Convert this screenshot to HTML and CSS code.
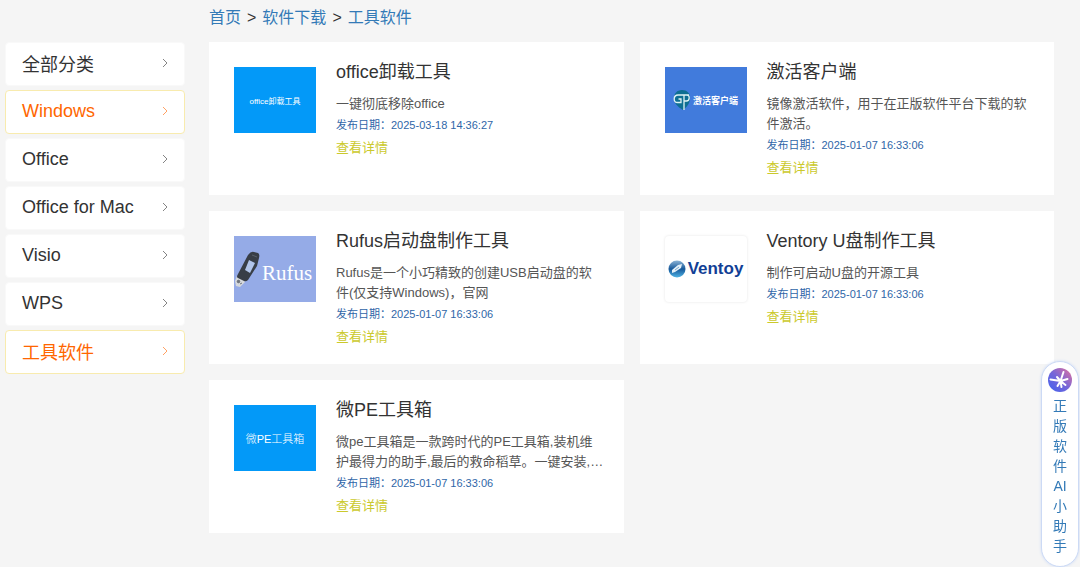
FILE: index.html
```html
<!DOCTYPE html>
<html lang="zh-CN">
<head>
    <meta charset="UTF-8">
    <meta name="viewport" content="width=device-width, initial-scale=1.0">
    <title>工具软件</title>
    <link rel="stylesheet" href="styles.css">
</head>
<body>
    <div class="page">
        <ul class="side">
            <li><a href="#">全部分类<svg class="arrow" viewBox="0 0 6 10"><path d="M1 1l4 4-4 4"/></svg></a></li>
            <li><a href="#" class="on">Windows<svg class="arrow" viewBox="0 0 6 10"><path d="M1 1l4 4-4 4"/></svg></a></li>
            <li><a href="#">Office<svg class="arrow" viewBox="0 0 6 10"><path d="M1 1l4 4-4 4"/></svg></a></li>
            <li><a href="#">Office for Mac<svg class="arrow" viewBox="0 0 6 10"><path d="M1 1l4 4-4 4"/></svg></a></li>
            <li><a href="#">Visio<svg class="arrow" viewBox="0 0 6 10"><path d="M1 1l4 4-4 4"/></svg></a></li>
            <li><a href="#">WPS<svg class="arrow" viewBox="0 0 6 10"><path d="M1 1l4 4-4 4"/></svg></a></li>
            <li><a href="#" class="on">工具软件<svg class="arrow" viewBox="0 0 6 10"><path d="M1 1l4 4-4 4"/></svg></a></li>
        </ul>

        <div class="main">
            <div class="crumb">
                <a href="#">首页</a><span>&gt;</span><a href="#">软件下载</a><span>&gt;</span><a href="#">工具软件</a>
            </div>

            <div class="list">
                <div class="card">
                    <div class="pic blue"><span class="pic_office">office卸载工具</span></div>
                    <div class="info">
                        <h3>office卸载工具</h3>
                        <p class="desc">一键彻底移除office</p>
                        <p class="date">发布日期：2025-03-18 14:36:27</p>
                        <a href="#" class="more">查看详情</a>
                    </div>
                </div>

                <div class="card">
                    <div class="pic royal">
                        <svg class="logo_gt" viewBox="0 0 18 22">
                            <path d="M9 1C4 1 1 4.500 1 9.500c0 5 4 8.500 9 11.500 4-3 7-7 7-12 0-5-3-8-8-8z" fill="#0d6f92"/>
                            <path d="M16 6H5C2.500 6 1.200 8 1.200 10s1.300 3.500 3.300 3.500h3.500V10H5.500M11 6v15M11 12h2.500c3.500 0 3.500-6 .5-6" fill="none" stroke="#dff3f5" stroke-width="1.300"/>
                        </svg>
                        <span class="pic_client">激活客户端</span>
                    </div>
                    <div class="info">
                        <h3>激活客户端</h3>
                        <p class="desc">镜像激活软件，用于在正版软件平台下载的软件激活。</p>
                        <p class="date">发布日期：2025-01-07 16:33:06</p>
                        <a href="#" class="more">查看详情</a>
                    </div>
                </div>

                <div class="card">
                    <div class="pic lilac">
                        <svg class="logo_usb" viewBox="0 0 26 38">
                            <path d="M3 26l6 2 2 4-5 5-4-1-1-5z" fill="#d5d8dc"/>
                            <path d="M3 31l2-1 1 2-2 1zM6 34l2-1" fill="#6f747c" stroke="#6f747c"/>
                            <path d="M4 24L14 5q3-4 6-3l4 1q2 1 1 5L23 16 14 30q-2 2-4 1l-6-3q-2-1 0-4z" fill="#383e47"/>
                            <path d="M15 10l6 3-5 10-5-3z" fill="#b1c5ea"/>
                            <path d="M18 5l5 2" stroke="#59616c" stroke-width="1"/>
                        </svg>
                        <span class="pic_rufus">Rufus</span>
                    </div>
                    <div class="info">
                        <h3>Rufus启动盘制作工具</h3>
                        <p class="desc">Rufus是一个小巧精致的创建USB启动盘的软件(仅支持Windows)，官网</p>
                        <p class="date">发布日期：2025-01-07 16:33:06</p>
                        <a href="#" class="more">查看详情</a>
                    </div>
                </div>

                <div class="card">
                    <div class="pic plain">
                        <svg class="logo_ventoy" viewBox="0 0 18 18">
                            <defs>
                                <linearGradient id="ball" x1="0" y1="0" x2="0" y2="1">
                                    <stop offset="0" stop-color="#8cb4d6"/>
                                    <stop offset=".5" stop-color="#16589a"/>
                                    <stop offset="1" stop-color="#4fb3e4"/>
                                </linearGradient>
                            </defs>
                            <circle cx="9" cy="9" r="8.500" fill="url(#ball)"/>
                            <path d="M4 10l6-5 4-1-1 4-6 4-3 1z" fill="#e4f0f8"/>
                            <path d="M7 10l4-3" stroke="#7aa7cc" stroke-width="1"/>
                        </svg>
                        <span class="pic_ventoy">Ventoy</span>
                    </div>
                    <div class="info">
                        <h3>Ventory U盘制作工具</h3>
                        <p class="desc">制作可启动U盘的开源工具</p>
                        <p class="date">发布日期：2025-01-07 16:33:06</p>
                        <a href="#" class="more">查看详情</a>
                    </div>
                </div>

                <div class="card">
                    <div class="pic blue"><span class="pic_pe">微PE工具箱</span></div>
                    <div class="info">
                        <h3>微PE工具箱</h3>
                        <p class="desc">微pe工具箱是一款跨时代的PE工具箱,装机维护最得力的助手,最后的救命稻草。一键安装,…</p>
                        <p class="date">发布日期：2025-01-07 16:33:06</p>
                        <a href="#" class="more">查看详情</a>
                    </div>
                </div>
            </div>
        </div>
    </div>

    <button type="button" class="helper">
        <svg viewBox="0 0 24 24">
            <defs>
                <linearGradient id="ai" x1="0" y1="1" x2="1" y2="0">
                    <stop offset="0" stop-color="#3f62f0"/>
                    <stop offset=".5" stop-color="#7666d8"/>
                    <stop offset="1" stop-color="#e5739c"/>
                </linearGradient>
            </defs>
            <circle cx="12" cy="12" r="12" fill="url(#ai)"/>
            <path d="M2.500 11.500l10 1.500M15.500 4L12.500 13l-3 5M12.500 13l7-2M12.500 13l5 4M12.500 13l1 6M9 9l3.500 4" fill="none" stroke="#fff" stroke-width="2" stroke-linecap="round"/>
        </svg>
        <span>正<br>版<br>软<br>件<br>AI<br>小<br>助<br>手</span>
    </button>
</body>
</html>
```
FILE: styles.css
```css
*{box-sizing: border-box;}
body{margin: 0;background: #f5f5f5;color: #333;font-family: "Liberation Sans","Noto Sans CJK SC",sans-serif;}
ul,h3,p{margin: 0;padding: 0;}
li{list-style: none;}
a{text-decoration: none;}

.page{display: flex;gap: 24px;padding: 0 26px 34px 5px;}

.side{width: 180px;flex: none;display: flex;flex-direction: column;gap: 4px;padding-top: 42px;}
.side a{display: flex;align-items: center;justify-content: space-between;height: 44px;padding: 0 16px 2px;
border: 1px solid #f9f9f9;border-radius: 4px;background: #fff;color: #333;font-size: 18px;}
.side .on{color: #f60;border-color: #f8ebae;}
.arrow{width: 6px;height: 10px;fill: none;stroke: currentColor;stroke-width: 1;opacity: .6;}

.main{flex: 1;min-width: 0;}
.crumb{display: flex;gap: 6px;height: 42px;padding-top: 8px;font-size: 16px;line-height: 20px;}
.crumb a{color: #337ab7;}

.list{display: grid;grid-template-columns: repeat(2,1fr);gap: 16px;}
.card{display: flex;align-items: flex-start;gap: 20px;min-height: 153px;padding: 25px 19px 12px 25px;background: #fff;}

.pic{width: 82px;height: 66px;flex: none;display: flex;align-items: center;justify-content: center;gap: 2px;color: #fff;white-space: nowrap;}
.blue{background: #0399f8;}
.royal{background: #417bdc;}
.lilac{background: #95abe7;gap: 2px;justify-content: flex-start;}
.plain{border-radius: 4px;box-shadow: 0 0 3px #e4e4e4;}
.pic_office{font-size: 8px;}
.pic_client{font-size: 9px;font-weight: bold;}
.pic_rufus{font-family: "Liberation Serif",serif;font-size: 21px;padding-top: 8px;}
.pic_ventoy{font-size: 17px;font-weight: bold;color: #123f96;}
.pic_pe{font-size: 11px;font-weight: 300;}
.logo_gt{width: 18px;height: 22px;}
.logo_usb{width: 26px;height: 38px;}
.logo_ventoy{width: 18px;height: 18px;}

.info{flex: 1;min-width: 0;}
.info h3{margin: -7px 0 10px;font-size: 18px;font-weight: normal;line-height: 24px;}
.desc{font-size: 13px;line-height: 20px;color: #555;}
.date{font-size: 11px;line-height: 22px;color: #2f66a8;}
.more{display: block;font-size: 13px;line-height: 24px;color: #cbc92c;}

.helper{position: fixed;right: 1px;bottom: 0;display: flex;flex-direction: column;align-items: center;gap: 4px;
width: 38px;padding: 6px 0 10px;border: 1px solid #ccdaf5;border-radius: 19px;background: #fff;
box-shadow: 0 0 3px #ccdaf5;color: #337ab7;font-family: inherit;font-size: 14px;line-height: 20px;}
.helper svg{width: 24px;height: 24px;}
```
